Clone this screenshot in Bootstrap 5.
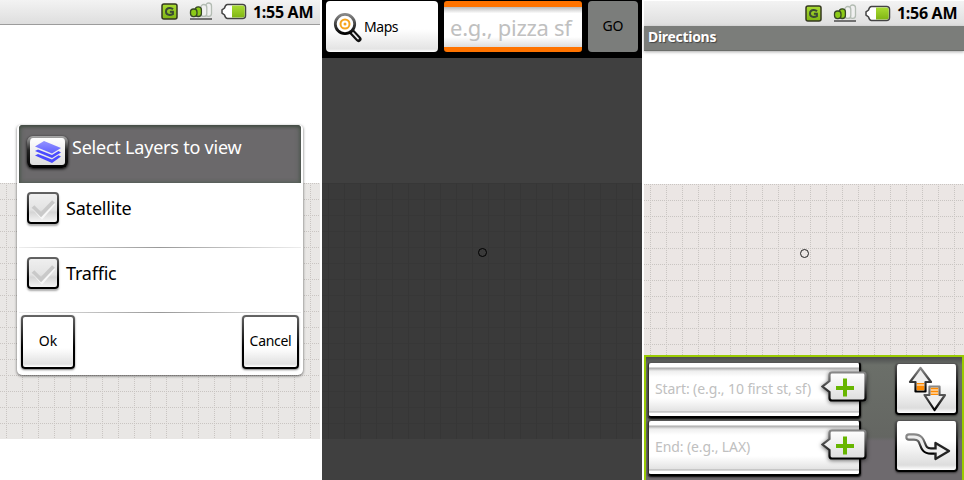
<!DOCTYPE html>
<html lang="en">
<head>
<meta charset="utf-8">
<meta name="viewport" content="width=device-width, initial-scale=1">
<title>Maps</title>
<link href="https://cdn.jsdelivr.net/npm/bootstrap@5.3.0/dist/css/bootstrap.min.css" rel="stylesheet">
<style>
body{font-family:"Noto Sans","Open Sans",sans-serif;color:#000;background:#fff;line-height:1;width:964px;height:480px;overflow:hidden}
.screens{gap:2px;height:480px}
.phone{width:320px;height:480px}
.statusbar{height:25px;background:linear-gradient(#f3f3f3,#dedede);border-bottom:1px solid #9c9c9c;padding-right:7px}
.late .statusbar{height:26px;border-top:1px solid #fff;border-bottom:0}
.clock{font-size:16px;font-weight:700;letter-spacing:-.3px;width:60px;white-space:nowrap;margin-top:-1px}
.canvas{padding-top:158px}
.tiles{height:256px;background:#e9e7e5}
.pin{width:9px;height:9px;border:1.4px solid #222;border-radius:50%;left:156px;top:65px}
.pin-dark{border-color:#000}
.dialog{left:17px;top:125px;width:286px;height:250px;background:#fff;border-radius:4px 4px 5px 5px;box-shadow:0 1px 3px #0009;padding:0 2px}
.dialog-head{height:58px;background:#6b696b;box-shadow:inset 0 2px 3px #444c45,inset 2px 0 4px #566057,inset -2px 0 4px #566057;border-radius:4px 4px 0 0;color:#fff;font-size:18px;padding:11px 0 0 8px}
.dialog-head span{margin:2px 0 0 4px;letter-spacing:-.22px}
.layers-btn{width:41px;height:32px;border:solid transparent;border-width:2px 3px 3px;border-radius:6px;background:linear-gradient(#fff,#ddd) padding-box,linear-gradient(#aaa,#222 45%,#000) border-box;box-shadow:0 1px 3px #000}
.choice{height:65px;padding:9px 0 0 8px;font-size:18px;border-bottom:1px solid;border-image:linear-gradient(90deg,#eee,#999 50%,#eee) 1}
.choice span{margin:7px 0 0 7px;letter-spacing:-.2px}
.tick{width:32px;height:32px;border:2px solid transparent;border-radius:4px;background:linear-gradient(#efefef,#e3e3e3 55%,#d5d5d5 65%,#f4f4f4) padding-box,linear-gradient(#666,#000 70%) border-box;box-shadow:0 2px 2px #0005}
.key{border:2px solid transparent;border-radius:4px;background:linear-gradient(#fff 62%,#e1e1e1 94%,#fff) padding-box,linear-gradient(#666,#000 60%) border-box;box-shadow:0 1px 2px #0008;font-size:14px;color:#000;padding:0 0 2px;line-height:1}
.actions{padding:2px 2px 0}
.ok{width:54px;height:54px}
.cancel{width:57px;height:54px;letter-spacing:-.3px}
.search{background:#404040}
.searchbar{height:58px;background:#000;padding:1px 4px 6px}
.searchbar .key{height:51px}
.search-gap{height:125px}
.maps-key{width:112px;padding:0 0 0 5px;border:0;letter-spacing:-.45px;background:linear-gradient(#fff 55%,#e4e4e4 94%,#fff)}
.query{width:138px;height:51px;margin-left:6px;border:solid #ff7300;border-width:6px 0 5px;border-radius:3px;background:linear-gradient(#bbb,#fff 16%,#fff 75%,#ddd);font-size:22px;letter-spacing:-.27px;padding:0 0 0 6px;outline:0}
.query::placeholder,.place::placeholder{color:#c0c0c0;opacity:1}
.go{width:50px;border:0;margin-left:6px;background:#7b7d7b}
.dim{height:256px;background:linear-gradient(90deg,#363636 1px,transparent 1px) 6px 0/16px 16px,linear-gradient(#373737 1px,transparent 1px) 0 0/16px 16px,#3a3a3a}
.titlebar{height:25px;background:#7b7d7a;border-bottom:1px solid #6b6d6a;color:#fff;font-size:14px;font-weight:700;letter-spacing:-.3px;padding:4px 4px 0;text-shadow:1px 1px 1px #444;box-shadow:0 1px 3px #aaa}
.late .canvas{padding-top:133px}
.late .tiles{height:171px;background:#ebe6e4}
.panel{height:125px;border:solid #9acb02;border-width:2px 2px 0;background:linear-gradient(#4b4d4d,#6b6f69 8px,#646662 80px,#6e6a6e 84px);padding:5px 4px 0 2px}
.field{height:58px;width:219px}
.place{width:213px;height:56px;border:solid;border-width:1px 2px 2px 1px;border-color:#555 #000 #000 #333;border-radius:3px;background:linear-gradient(#fff 4px,#aaa 5px,#eee 8px,#fff 14px,#fff 35px,#e3e3e3 48px,#aaa 49px,#fff 50px);font-size:14px;letter-spacing:-.1px;padding:0 0 2px 6px;outline:0;box-shadow:0 1px 2px #000}
.callout{left:173px;top:9px;filter:drop-shadow(0 1px 2px #0009)}
.tool{width:63px;height:52px;border-width:1px 2px 2px;padding:0;background:linear-gradient(#fff 40%,#ddd 90%,#fff) padding-box,linear-gradient(#555,#000 60%) border-box}
.tools{gap:5px;padding-top:1px}
</style>
<script src="https://cdn.jsdelivr.net/npm/bootstrap@5.3.0/dist/js/bootstrap.bundle.min.js"></script>
</head>
<body>
<svg width="0" height="0" class="position-absolute" aria-hidden="true">
<defs>
<linearGradient id="lime" x2="0" y2="1"><stop stop-color="#a9dc32"/><stop offset="1" stop-color="#80b514"/></linearGradient>
<linearGradient id="blue" x2="0" y2="1"><stop stop-color="#9393ff"/><stop offset="1" stop-color="#5f5fff"/></linearGradient>
<linearGradient id="paper" x2="0" y2="1"><stop stop-color="#fff"/><stop offset="1" stop-color="#ddd"/></linearGradient>
<linearGradient id="edge" x2="0" y2="1"><stop stop-color="#888"/><stop offset="1" stop-color="#000"/></linearGradient>
<pattern id="gridlines" width="16" height="16" x="6" patternUnits="userSpaceOnUse"><path d="M0 .5H16M.5 0V16" stroke="#c9c5c2" stroke-dasharray="1 1"/></pattern>
<symbol id="status" viewBox="0 0 88 20">
 <rect x="1" y="2" width="15" height="15" rx="2" fill="url(#lime)" stroke="#34381f" stroke-width="1.5"/>
 <path d="M12 7.300Q10.800 6 8.800 6C6.500 6 5 7.400 5 9.500s1.500 3.400 3.700 3.400q1.700 0 3.200-.8V9.700H8.900" fill="none" stroke="#3b4a35" stroke-width="2"/>
 <g stroke-width="1.300"><rect x="44.700" y="1" width="5.800" height="13.300" rx="2.900" fill="#f0f0f0" stroke="#b3bcb3"/><rect x="39.800" y="2.500" width="6" height="11.900" rx="3" fill="#f0f0f0" stroke="#b3bcb3"/><rect x="34.200" y="4.800" width="6.200" height="9.700" rx="3" fill="#8ccb17" stroke="#374726"/><rect x="29.500" y="7" width="6.500" height="7.600" rx="3" fill="#8ccb17" stroke="#374726"/></g>
 <path d="M29 17h22" stroke="#555" stroke-width="1.600"/>
 <path d="M66.500 2.600H81.500q3 0 3 3v7.800q0 3-3 3H66.500q-2 0-3-3.400L61 11.200V7.800l2.500-1.800Q64.500 2.600 66.500 2.600z" fill="#fff" stroke="#444" stroke-width="1.500"/>
 <path d="M71 3.400h10.300q2.400 0 2.400 2.400v7.400q0 2.400-2.400 2.400H71z" fill="url(#lime)"/>
</symbol>
<symbol id="check" viewBox="0 0 28 28"><path d="M5 14l8 9L25 9" fill="none" stroke="#f8f8f8" stroke-width="3.500"/><path d="M4 12.500l8 8L24.500 7.500" fill="none" stroke="#c9c9c9" stroke-width="3.800"/></symbol>
<symbol id="bubble" viewBox="0 0 46 34"><path d="M11 1.500h31q2.500 0 2.500 2.500v23q0 2.500-2.500 2.500H11q-2.500 0-2.500-2.500v-6L1.500 15.500 8.500 10V4q0-2.500 2.500-2.500z" fill="url(#paper)" stroke="url(#edge)" stroke-width="2.200"/><path d="M24 7.500v18M15 17h18" stroke="#67b500" stroke-width="4"/></symbol>
</defs></svg>

<main class="screens d-flex">
 <section class="phone position-relative">
  <div class="statusbar d-flex align-items-center justify-content-end"><svg width="88" height="20" class="me-1"><use href="#status"/></svg><span class="clock">1:55 AM</span></div>
  <div class="canvas"><div class="tiles"><svg class="d-block" width="320" height="256"><rect width="320" height="256" fill="url(#gridlines)"/></svg></div></div>
  <div class="dialog position-absolute">
   <div class="dialog-head d-flex align-items-start"><div class="layers-btn d-flex justify-content-center align-items-center"><svg width="28" height="24" viewBox="0 0 28 24"><g fill="#4b4bff"><path d="M1 15.500l3-1.500 14 5.500 6.500-4.200 2.500 1.200L18 23z"/><path d="M1 11l3-1.500 14 5.500 6.500-4 2.500 1.500L18 18z"/></g><path d="M1 6.500L10 1l17 7-9 5.500z" fill="url(#blue)"/></svg></div><span>Select Layers to view</span></div>
   <div class="choice d-flex align-items-start"><div class="tick"><svg class="d-block" width="28" height="28"><use href="#check"/></svg></div><span>Satellite</span></div>
   <div class="choice d-flex align-items-start"><div class="tick"><svg class="d-block" width="28" height="28"><use href="#check"/></svg></div><span>Traffic</span></div>
   <div class="d-flex justify-content-between actions"><button class="key ok">Ok</button><button class="key cancel">Cancel</button></div>
  </div>
 </section>

 <section class="phone search">
  <div class="searchbar d-flex">
   <button class="key maps-key d-flex align-items-center"><svg width="33" height="34" viewBox="0 0 33 34"><path d="M20 21l7.500 8" stroke="#111" stroke-width="6" stroke-linecap="round"/><path d="M22 23l5 5.500" stroke="#eee" stroke-width="1.800" stroke-linecap="round"/><circle cx="14" cy="14" r="9.700" fill="#fff" stroke="url(#edge)" stroke-width="2.800"/><circle cx="14" cy="14" r="4.500" fill="none" stroke="#f7a51d" stroke-width="2"/><circle cx="14" cy="14" r="1.500" fill="#f7a51d"/></svg><span>Maps</span></button>
   <input class="query" placeholder="e.g., pizza sf" aria-label="Search">
   <button class="key go">GO</button>
  </div>
  <div class="search-gap"></div>
  <div class="dim position-relative"><i class="pin pin-dark position-absolute"></i></div>
 </section>

 <section class="phone late">
  <div class="statusbar d-flex align-items-center justify-content-end"><svg width="88" height="20" class="me-1"><use href="#status"/></svg><span class="clock">1:56 AM</span></div>
  <div class="titlebar">Directions</div>
  <div class="canvas"><div class="tiles position-relative"><svg class="d-block" width="320" height="171"><rect width="320" height="171" fill="url(#gridlines)"/></svg><i class="pin position-absolute"></i></div></div>
  <div class="panel d-flex justify-content-between">
   <div>
    <div class="field position-relative"><input class="place" placeholder="Start: (e.g., 10 first st, sf)" aria-label="Start"><svg class="callout position-absolute" width="46" height="34"><use href="#bubble"/></svg></div>
    <div class="field position-relative"><input class="place" placeholder="End: (e.g., LAX)" aria-label="End"><svg class="callout position-absolute" width="46" height="34"><use href="#bubble"/></svg></div>
   </div>
   <div class="tools d-flex flex-column">
    <button class="key tool d-flex align-items-center justify-content-center" aria-label="Swap"><svg width="40" height="48" viewBox="0 0 40 48"><g fill="#eee" stroke="url(#edge)" stroke-width="2.200" stroke-linejoin="round"><path d="M13.500 3L24 17h-5.500v9.500h-10V17H3z"/><path d="M22.500 21.500h10V30H38L27.500 45 17.500 30h5z"/></g><path d="M9.800 18h7.400v7.300H9.800zM23.800 22.700h7.400V30h-7.400z" fill="#ff8a00"/><path d="M9.800 20h7.400M23.800 25h7.400M23.800 28h7.400" stroke="#fff"/></svg></button>
    <button class="key tool d-flex align-items-center justify-content-center" aria-label="Route"><svg width="50" height="40" viewBox="0 0 50 40"><path d="M7 11h5c12 0 5 14 17 14h7" fill="none" stroke="url(#edge)" stroke-width="7.500" stroke-linecap="round"/><path d="M33.500 17l13.500 8-13.500 8z" fill="#eee" stroke="#222" stroke-width="2.400" stroke-linejoin="round"/><path d="M7 11h5c12 0 5 14 17 14h7" fill="none" stroke="#eee" stroke-width="3.200" stroke-linecap="round"/></svg></button>
   </div>
  </div>
 </section>
</main>
</body>
</html>
